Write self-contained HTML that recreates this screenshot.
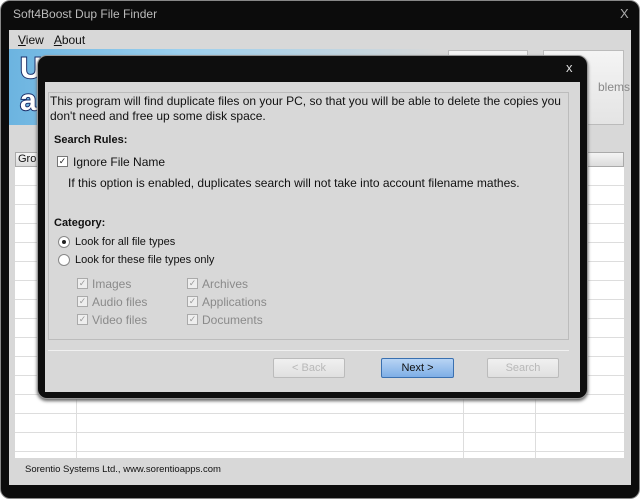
<!DOCTYPE html>
<html><head><style>
*{margin:0;padding:0;box-sizing:border-box}
body{width:640px;height:499px;background:#fff;font-family:"Liberation Sans",sans-serif;position:relative;overflow:hidden}
.a{position:absolute}
.t{position:absolute;font-size:12px;color:#111;white-space:nowrap}
.g{color:#8a8a8a}
.cb{position:absolute;width:11px;height:11px;border:1px solid #777;background:#fff;font-size:9px;line-height:9px;text-align:center;color:#222}
.cb.d{border-color:#aaa;background:#eee;color:#999}
.rd{position:absolute;width:12px;height:12px;border:1px solid #888;border-radius:50%;background:#fff}
.btn{position:absolute;height:20px;border:1px solid #bbb;border-radius:2px;background:linear-gradient(#f0f0f0,#e0e0e0);font-size:11px;color:#b8b8b8;text-align:center;line-height:18px}
.big{position:absolute;font-weight:bold;font-size:30px;color:#fff;-webkit-text-stroke:2px #1a2f6a;paint-order:stroke fill;font-family:"Liberation Sans",sans-serif}
</style></head><body>
<div class="a" style="left:0;top:0;width:640px;height:499px;background:#0c0c0c;border-radius:10px;border:1px solid #888"></div>
<div class="t" style="left:13px;top:7px;color:#bbb;font-size:12px">Soft4Boost Dup File Finder</div>
<div class="t" style="left:620px;top:6px;color:#aaa;font-size:13px">X</div>
<div class="a" style="left:9px;top:30px;width:622px;height:455px;background:#d8d8d8"></div>
<div class="t" style="left:18px;top:33px"><u>V</u>iew &nbsp;&nbsp;<u>A</u>bout</div>
<div class="a" style="left:9px;top:49px;width:430px;height:76px;background:linear-gradient(90deg,#6cb4e0,#9cd0ee 40%,#d8d8d8)"></div>
<div class="big" style="left:20px;top:52px">U</div>
<div class="big" style="left:20px;top:84px">a</div>
<div class="a" style="left:448px;top:50px;width:80px;height:14px;background:#f4f4f4;border:1px solid #bbb"></div>
<div class="a" style="left:543px;top:50px;width:81px;height:75px;background:linear-gradient(#f4f4f4,#e4e4e4);border:1px solid #bbb"></div>
<div class="t" style="left:598px;top:80px;color:#888">blems</div>
<div class="a" style="left:15px;top:152px;width:609px;height:15px;background:linear-gradient(#f4f4f4,#dcdcdc);border:1px solid #aaa"></div>
<div class="t" style="left:18px;top:153px;font-size:11px">Gro</div>
<div class="a" style="left:15px;top:167px;width:609px;height:291px;background:repeating-linear-gradient(#fff 0 18px,#ddd 18px 19px)"></div>
<div class="a" style="left:76px;top:167px;width:1px;height:291px;background:#ddd"></div>
<div class="a" style="left:463px;top:167px;width:1px;height:291px;background:#ddd"></div>
<div class="a" style="left:535px;top:167px;width:1px;height:291px;background:#ddd"></div>
<div class="t" style="left:25px;top:464px;font-size:9.5px">Sorentio Systems Ltd., www.sorentioapps.com</div>

<div class="a" style="left:37px;top:55px;width:551px;height:344px;background:#0e0e0e;border-radius:10px;border:1px solid #999;box-shadow:0 2px 3px #666"></div>
<div class="t" style="left:566px;top:60px;color:#ddd;font-size:13px">x</div>
<div class="a" style="left:45px;top:82px;width:535px;height:310px;background:#d8d8d8"></div>
<div class="a" style="left:48px;top:92px;width:521px;height:248px;border:1px solid #bcbcbc"></div>
<div class="t" style="left:50px;top:94px">This program will find duplicate files on your PC, so that you will be able to delete the copies you</div>
<div class="t" style="left:50px;top:109px">don't need and free up some disk space.</div>
<div class="t" style="left:54px;top:134px;font-weight:bold;font-size:11px">Search Rules:</div>
<div class="cb" style="left:57px;top:156px">✓</div>
<div class="t" style="left:73px;top:155px">Ignore File Name</div>
<div class="t" style="left:68px;top:176px">If this option is enabled, duplicates search will not take into account filename mathes.</div>
<div class="t" style="left:54px;top:217px;font-weight:bold;font-size:11px">Category:</div>
<div class="rd" style="left:58px;top:236px"><div class="a" style="left:3px;top:3px;width:4px;height:4px;border-radius:50%;background:#222"></div></div>
<div class="t" style="left:75px;top:236px;font-size:11px">Look for all file types</div>
<div class="rd" style="left:58px;top:254px"></div>
<div class="t" style="left:75px;top:254px;font-size:11px">Look for these file types only</div>
<div class="cb d" style="left:77px;top:278px">✓</div><div class="t g" style="left:92px;top:277px">Images</div>
<div class="cb d" style="left:77px;top:296px">✓</div><div class="t g" style="left:92px;top:295px">Audio files</div>
<div class="cb d" style="left:77px;top:314px">✓</div><div class="t g" style="left:92px;top:313px">Video files</div>
<div class="cb d" style="left:187px;top:278px">✓</div><div class="t g" style="left:202px;top:277px">Archives</div>
<div class="cb d" style="left:187px;top:296px">✓</div><div class="t g" style="left:202px;top:295px">Applications</div>
<div class="cb d" style="left:187px;top:314px">✓</div><div class="t g" style="left:202px;top:313px">Documents</div>
<div class="a" style="left:48px;top:350px;width:521px;height:1px;background:#bcbcbc;border-bottom:1px solid #f0f0f0"></div>
<div class="btn" style="left:273px;top:358px;width:72px">&lt; Back</div>
<div class="btn" style="left:381px;top:358px;width:73px;border-color:#3a70b0;background:linear-gradient(#b8d4f4,#7eaee6);color:#111">Next &gt;</div>
<div class="btn" style="left:487px;top:358px;width:72px">Search</div>
</body></html>
